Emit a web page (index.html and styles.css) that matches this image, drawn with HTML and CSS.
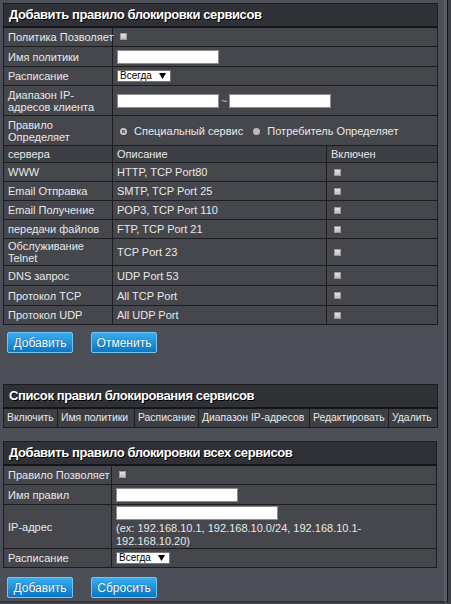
FILE: index.html
```html
<!DOCTYPE html>
<html lang="ru">
<head>
    <meta charset="UTF-8">
    <title>Блокировка сервисов</title>
    <link rel="stylesheet" href="styles.css">
</head>
<body>

    <div class="page">

        <!-- Добавить правило блокировки сервисов -->
        <table class="panel">
            <colgroup>
                <col class="c1">
                <col class="c2">
                <col class="c3">
            </colgroup>
            <tr><th colspan="3" class="panel-title">Добавить правило блокировки сервисов</th></tr>
            <tr class="row-form">
                <td>Политика Позволяет</td>
                <td colspan="2"><input type="checkbox" class="chk"></td>
            </tr>
            <tr class="row-form">
                <td>Имя политики</td>
                <td colspan="2"><input type="text" class="txt txt-name"></td>
            </tr>
            <tr class="row-sel">
                <td>Расписание</td>
                <td colspan="2"><select class="sel"><option>Всегда</option></select></td>
            </tr>
            <tr class="row-tall">
                <td>Диапазон IP-адресов клиента</td>
                <td colspan="2"><input type="text" class="txt txt-ip"><span class="tilde">~</span><input type="text" class="txt txt-ip"></td>
            </tr>
            <tr class="row-tall">
                <td>Правило Определяет</td>
                <td colspan="2">
                    <label class="opt"><input type="radio" name="rule" class="rad" checked> Специальный сервис</label>
                    <label class="opt"><input type="radio" name="rule" class="rad"> Потребитель Определяет</label>
                </td>
            </tr>
            <tr class="row-head">
                <td>сервера</td>
                <td>Описание</td>
                <td>Включен</td>
            </tr>
            <tr><td>WWW</td><td>HTTP, TCP Port80</td><td><input type="checkbox" class="chk"></td></tr>
            <tr><td>Email Отправка</td><td>SMTP, TCP Port 25</td><td><input type="checkbox" class="chk"></td></tr>
            <tr><td>Email Получение</td><td>POP3, TCP Port 110</td><td><input type="checkbox" class="chk"></td></tr>
            <tr><td>передачи файлов</td><td>FTP, TCP Port 21</td><td><input type="checkbox" class="chk"></td></tr>
            <tr class="row-mid"><td>Обслуживание Telnet</td><td>TCP Port 23</td><td><input type="checkbox" class="chk"></td></tr>
            <tr class="row-form"><td>DNS запрос</td><td>UDP Port 53</td><td><input type="checkbox" class="chk"></td></tr>
            <tr class="row-form"><td>Протокол TCP</td><td>All TCP Port</td><td><input type="checkbox" class="chk"></td></tr>
            <tr><td>Протокол UDP</td><td>All UDP Port</td><td><input type="checkbox" class="chk"></td></tr>
        </table>

        <div class="actions">
            <button class="btn">Добавить</button>
            <button class="btn">Отменить</button>
        </div>

        <!-- Список правил -->
        <table class="panel list">
            <colgroup>
                <col class="l1">
                <col class="l2">
                <col class="l3">
                <col class="l4">
                <col class="l5">
                <col class="l6">
            </colgroup>
            <tr><th colspan="6" class="panel-title">Список правил блокирования сервисов</th></tr>
            <tr class="row-head list-head">
                <td>Включить</td>
                <td>Имя политики</td>
                <td>Расписание</td>
                <td>Диапазон IP-адресов</td>
                <td>Редактировать</td>
                <td>Удалить</td>
            </tr>
        </table>

        <!-- Добавить правило блокировки всех сервисов -->
        <table class="panel all">
            <colgroup>
                <col class="a1">
                <col class="a2">
            </colgroup>
            <tr><th colspan="2" class="panel-title">Добавить правило блокировки всех сервисов</th></tr>
            <tr class="row-form">
                <td>Правило Позволяет</td>
                <td><input type="checkbox" class="chk"></td>
            </tr>
            <tr class="row-form">
                <td>Имя правил</td>
                <td><input type="text" class="txt txt-rule"></td>
            </tr>
            <tr class="row-ip">
                <td>IP-адрес</td>
                <td>
                    <input type="text" class="txt txt-addr">
                    <div class="hint">(ex: 192.168.10.1, 192.168.10.0/24, 192.168.10.1-<br>192.168.10.20)</div>
                </td>
            </tr>
            <tr class="row-sel">
                <td>Расписание</td>
                <td><select class="sel"><option>Всегда</option></select></td>
            </tr>
        </table>

        <div class="actions actions-last">
            <button class="btn">Добавить</button>
            <button class="btn">Сбросить</button>
        </div>

    </div>

</body>
</html>
```

FILE: styles.css
```css
* {
    box-sizing: border-box;
    margin: 0;
    padding: 0;
}

body {
    background-color: #3d4046;
    font-family: "Liberation Sans", Arial, sans-serif;
    font-size: 11px;
    color: #e8e8e8;
}

.page {
    width: 447px;
    height: 602px;
    padding: 3px 0 0 3px;
    background-color: #4c4f57;
    border-right: 3px solid #5b5e66;
    border-bottom: 1px solid #2a2c31;
    box-shadow: 1px 0 0 #141518;
}

/* tables */

.panel {
    width: 434px;
    border-collapse: collapse;
    table-layout: fixed;
    border: 1px solid #1c1d21;
}

.c1 { width: 109px; }
.c2 { width: 214px; }
.c3 { width: 111px; }

.a1 { width: 108px; }

.l1 { width: 54px; }
.l2 { width: 77px; }
.l3 { width: 64px; }
.l4 { width: 111px; }
.l5 { width: 79px; }
.l6 { width: 49px; }

.panel td {
    background-color: #46474d;
    border: 1px solid #1c1d21;
    padding: 0 4px;
    height: 19px;
    line-height: 12px;
    vertical-align: middle;
    white-space: nowrap;
}

.panel .row-tall td,
.panel .row-mid td {
    white-space: normal;
}

.panel-title {
    background-color: #303136;
    border-bottom: 2px solid #141518;
    height: 23px;
    padding: 0 5px;
    text-align: left;
    font-size: 13px;
    font-weight: bold;
    letter-spacing: -0.4px;
    color: #fff;
    text-shadow: 1px 1px 0 #000;
}

.panel .row-form td { height: 20px; }
.panel .row-sel td { height: 19px; }
.panel .row-tall td { height: 30px; }
.panel .row-mid td { height: 27px; }
.panel .row-ip td { height: 44px; }

.panel .row-head td {
    background-color: #3e3f44;
    height: 17px;
}

.list {
    margin-top: 31px;
}

.list .list-head td {
    height: 20px;
    padding: 0 3px;
    font-size: 10.4px;
    overflow: hidden;
}

.all {
    margin-top: 13px;
}

/* inputs */

.chk {
    appearance: none;
    display: block;
    width: 7px;
    height: 7px;
    margin-left: 3px;
    background: linear-gradient(#e4e4e4, #bcbcbc);
    border: 1px solid #9a9a9a;
}

.rad {
    appearance: none;
    display: inline-block;
    width: 7px;
    height: 7px;
    margin: 0 4px 0 3px;
    border-radius: 50%;
    background-color: #b9b9b9;
    vertical-align: 0;
}

.rad:checked {
    background: radial-gradient(circle, #6a6a6a 0 1.5px, #c9c9c9 2px);
}

.opt + .opt {
    margin-left: 4px;
}

.txt {
    display: inline-block;
    height: 14px;
    border: 1px solid #8d8d8d;
    background-color: #fff;
    vertical-align: middle;
}

.txt-name { width: 102px; }
.txt-ip { width: 102px; }
.txt-rule { width: 122px; }
.txt-addr { width: 162px; }

.tilde {
    display: inline-block;
    width: 10px;
    text-align: center;
    color: #bbb;
    vertical-align: middle;
}

.sel {
    appearance: none;
    display: block;
    width: 54px;
    height: 12px;
    padding: 0 0 0 2px;
    border: 1px solid #777;
    border-radius: 0;
    font-family: "Liberation Sans", Arial, sans-serif;
    font-size: 10px;
    line-height: 10px;
    color: #000;
    background: #fff url("data:image/svg+xml;utf8,<svg xmlns='http://www.w3.org/2000/svg' width='7' height='6'><path d='M0 0h7L3.5 6z' fill='black'/></svg>") no-repeat 41px 2px;
}

.hint {
    margin-top: 2px;
    line-height: 13px;
    white-space: nowrap;
}

/* buttons */

.actions {
    display: flex;
    gap: 18px;
    padding: 7px 0 0 4px;
}

.actions-last {
    padding-top: 9px;
}

.btn {
    width: 66px;
    height: 21px;
    border: 1px solid #74c6f2;
    border-radius: 2px;
    background: linear-gradient(#37aef0, #0a76c5);
    color: #fff;
    font-family: "Liberation Sans", Arial, sans-serif;
    font-size: 12px;
    text-shadow: 0 0 1px #0a4a80;
    cursor: pointer;
}
```
